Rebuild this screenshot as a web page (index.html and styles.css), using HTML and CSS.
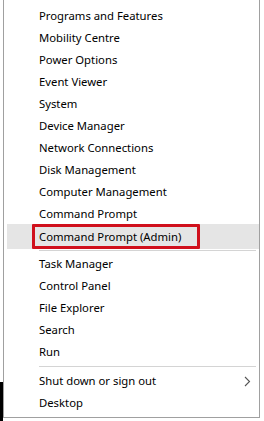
FILE: index.html
```html
<!DOCTYPE html>
<html lang="en">
<head>
    <meta charset="UTF-8">
    <meta name="viewport" content="width=device-width, initial-scale=1.0">
    <title>Quick Link Menu</title>
    <link rel="stylesheet" href="styles.css">
</head>
<body>
    <div class="screen">
        <div class="desk-edge">
            <div class="taskbar"></div>
        </div>

        <div class="menu">
            <div class="item">Programs and Features</div>
            <div class="item">Mobility Centre</div>
            <div class="item">Power Options</div>
            <div class="item">Event Viewer</div>
            <div class="item">System</div>
            <div class="item">Device Manager</div>
            <div class="item">Network Connections</div>
            <div class="item">Disk Management</div>
            <div class="item">Computer Management</div>
            <div class="item">Command Prompt</div>
            <div class="item active">
                Command Prompt (Admin)
                <span class="mark"></span>
            </div>
            <div class="sep sep-first"></div>
            <div class="item">Task Manager</div>
            <div class="item">Control Panel</div>
            <div class="item">File Explorer</div>
            <div class="item">Search</div>
            <div class="item">Run</div>
            <div class="sep"></div>
            <div class="item has-sub">
                Shut down or sign out
                <svg class="chevron" width="7" height="11" viewBox="0 0 7 11">
                    <path d="M1 1 L5.5 5.5 L1 10" fill="none" stroke="#555" stroke-width="1.1"/>
                </svg>
            </div>
            <div class="item">Desktop</div>
        </div>
    </div>
</body>
</html>
```

FILE: styles.css
```css
body {
    margin: 0;
    background-color: #fff;
    font-family: 'Noto Sans', 'Open Sans', sans-serif;
}

.screen {
    display: flex;
    height: 421px;
}

.desk-edge {
    width: 3px;
    display: flex;
    flex-direction: column;
    justify-content: flex-end;
}

.taskbar {
    height: 39px;
    background-color: #000;
}

.menu {
    width: 257px;
    height: 418px;
    box-sizing: border-box;
    border-left: 1px solid #a0a0a0;
    border-right: 1px solid #a0a0a0;
    border-bottom: 1px solid #a0a0a0;
    padding: 5px 0 0 3px;
    background-color: #fff;
}

.item {
    position: relative;
    height: 22px;
    line-height: 22px;
    padding-left: 32px;
    font-size: 11.3px;
    color: #000;
    white-space: nowrap;
}

.item.active {
    height: 25px;
    line-height: 25px;
    margin-top: -1px;
    margin-bottom: -2px;
    background-color: #e5e5e5;
}

.mark {
    position: absolute;
    left: 25px;
    top: 0;
    width: 168px;
    height: 25px;
    box-sizing: border-box;
    border: 3px solid #d0101c;
    border-radius: 1px;
}

.sep {
    height: 7px;
    position: relative;
}

.sep::after {
    content: "";
    position: absolute;
    left: 32px;
    right: 3px;
    top: 3px;
    height: 1px;
    background-color: #d4d4d4;
}

.sep-first {
    height: 6px;
}

.chevron {
    position: absolute;
    right: 8px;
    top: 6px;
}
```
